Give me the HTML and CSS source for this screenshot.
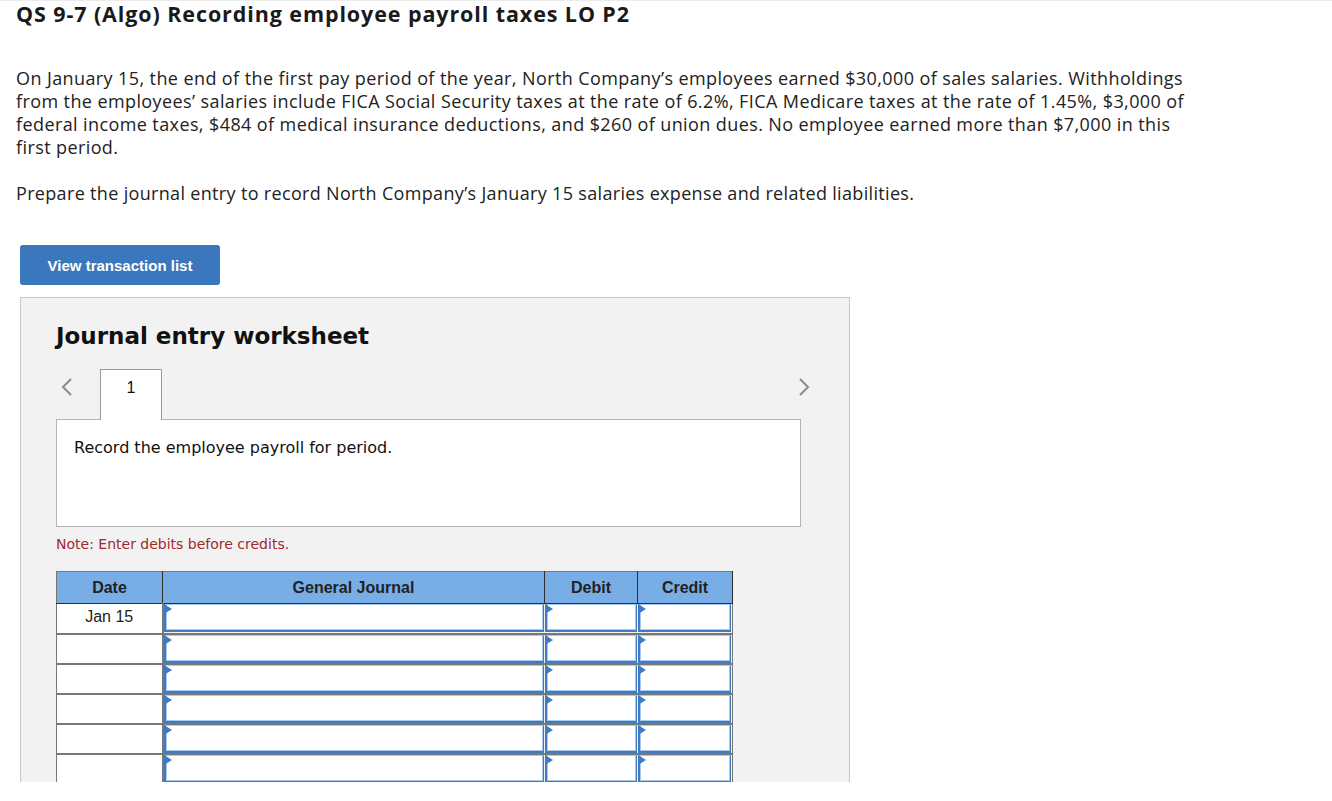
FILE: index.html
```html
<!DOCTYPE html>
<html>
<head>
<meta charset="utf-8">
<link rel="stylesheet" href="styles.css">
</head>
<body>
<div class="page">
  <h1 class="title">QS 9-7 (Algo) Recording employee payroll taxes LO P2</h1>
  <p class="para">On January 15, the end of the first pay period of the year, North Company’s employees earned $30,000 of sales salaries. Withholdings<br>from the employees’ salaries include FICA Social Security taxes at the rate of 6.2%, FICA Medicare taxes at the rate of 1.45%, $3,000 of<br>federal income taxes, $484 of medical insurance deductions, and $260 of union dues. No employee earned more than $7,000 in this<br>first period.</p>
  <p class="para para2">Prepare the journal entry to record North Company’s January 15 salaries expense and related liabilities.</p>
  <button class="btn">View transaction list</button>
  <div class="worksheet">
    <h2 class="ws-title">Journal entry worksheet</h2>
    <div class="tabs">
      <span class="chev chev-left"><svg width="12" height="20" viewBox="0 0 12 20"><path d="M10 2 L2 10 L10 18" fill="none" stroke="#8a8a8a" stroke-width="2"/></svg></span>
      <div class="tab">1</div>
      <span class="chev chev-right"><svg width="12" height="20" viewBox="0 0 12 20"><path d="M2 2 L10 10 L2 18" fill="none" stroke="#8a8a8a" stroke-width="2"/></svg></span>
    </div>
    <div class="desc">Record the employee payroll for period.</div>
    <div class="note">Note: Enter debits before credits.</div>
    <table class="journal">
      <thead>
        <tr><th class="c-date">Date</th><th class="c-gj">General Journal</th><th class="c-dr">Debit</th><th class="c-cr">Credit</th></tr>
      </thead>
      <tbody>
        <tr><td class="date">Jan 15</td><td class="in"><div class="box"></div></td><td class="in"><div class="box"></div></td><td class="in"><div class="box"></div></td></tr>
        <tr><td class="date"></td><td class="in"><div class="box"></div></td><td class="in"><div class="box"></div></td><td class="in"><div class="box"></div></td></tr>
        <tr><td class="date"></td><td class="in"><div class="box"></div></td><td class="in"><div class="box"></div></td><td class="in"><div class="box"></div></td></tr>
        <tr><td class="date"></td><td class="in"><div class="box"></div></td><td class="in"><div class="box"></div></td><td class="in"><div class="box"></div></td></tr>
        <tr><td class="date"></td><td class="in"><div class="box"></div></td><td class="in"><div class="box"></div></td><td class="in"><div class="box"></div></td></tr>
        <tr><td class="date"></td><td class="in"><div class="box"></div></td><td class="in"><div class="box"></div></td><td class="in"><div class="box"></div></td></tr>
        <tr><td class="date"></td><td class="in"><div class="box"></div></td><td class="in"><div class="box"></div></td><td class="in"><div class="box"></div></td></tr>
      </tbody>
    </table>
  </div>
</div>
</body>
</html>
```

FILE: styles.css
```css
html, body {
  margin: 0;
  padding: 0;
  background: #fff;
}
.page {
  height: 782px;
  overflow: hidden;
  border-top: 1px solid #ececec;
  box-sizing: border-box;
  font-family: "Open Sans", "Liberation Sans", sans-serif;
  color: #222;
}
.title {
  margin: 0;
  padding: 0 0 0 16px;
  font-size: 21.5px;
  font-weight: 700;
  line-height: 26px;
  letter-spacing: 0.9px;
  color: #1a1a1a;
}
.para {
  margin: 0;
  padding: 40px 0 0 16px;
  width: 1300px;
  font-size: 18px;
  line-height: 23px;
  letter-spacing: 0.4px;
  color: #222;
}
.para2 {
  padding-top: 23px;
  letter-spacing: 0.33px;
}
.btn {
  display: block;
  margin: 40px 0 0 20px;
  width: 200px;
  height: 40px;
  border: none;
  border-radius: 3px;
  background: #3a77bc;
  color: #fff;
  font-family: "Liberation Sans", Arial, sans-serif;
  font-weight: 700;
  font-size: 15px;
  padding: 0;
}
.worksheet {
  margin: 12px 0 0 20px;
  width: 830px;
  height: 600px;
  box-sizing: border-box;
  background: #f2f2f2;
  border: 1px solid #c6c6c6;
  padding: 0 0 0 35px;
}
.ws-title {
  margin: 0;
  padding-top: 24px;
  font-family: "DejaVu Sans", Verdana, sans-serif;
  font-weight: 700;
  font-size: 23px;
  line-height: 28px;
  color: #111;
}
.tabs {
  margin-top: 19px;
  display: flex;
  align-items: flex-start;
  height: 50px;
  width: 745px;
}
.chev {
  display: block;
  margin-top: 8px;
}
.chev-left {
  margin-left: 5px;
  width: 39px;
}
.chev-right {
  margin-left: auto;
  margin-right: -9px;
}
.tab {
  width: 62px;
  box-sizing: border-box;
  background: #fff;
  border: 1px solid #999;
  border-bottom: none;
  text-align: center;
  font-family: "Liberation Sans", Arial, sans-serif;
  font-size: 16px;
  padding-top: 9px;
  color: #111;
  position: relative;
  z-index: 1;
  height: 51px;
}
.desc {
  width: 745px;
  height: 108px;
  box-sizing: border-box;
  background: #fff;
  border: 1px solid #b4b4b4;
  padding: 17px 0 0 17px;
  font-family: "DejaVu Sans", Verdana, sans-serif;
  font-size: 16px;
  line-height: 22px;
  color: #111;
}
.note {
  margin-top: 7px;
  font-family: "DejaVu Sans", Verdana, sans-serif;
  font-size: 14px;
  line-height: 20px;
  color: #a3282c;
}
.journal {
  margin-top: 17px;
  border-collapse: collapse;
  width: 676px;
  table-layout: fixed;
  font-family: "Liberation Sans", Arial, sans-serif;
}
.journal th {
  background: #78ade5;
  height: 32px;
  padding: 0;
  font-size: 16px;
  font-weight: 700;
  color: #222;
  border: 1px solid #2f2f2f;
  border-top: 1px solid #777;
  box-sizing: border-box;
}
.journal th.c-date { border-left: 1px solid #777; }
.c-date { width: 106px; }
.c-gj { width: 382px; }
.c-dr { width: 93px; }
.c-cr { width: 95px; }
.journal td {
  height: 30px;
  padding: 0;
  border: 2px solid #777;
  border-top: none;
  border-left: none;
  box-sizing: border-box;
  background: #fff;
}
.journal td.date {
  border-left: 1px solid #777;
  text-align: center;
  font-size: 16px;
  color: #222;
  padding-bottom: 2px;
}
.journal td.in {
  border-right: none;
  border-bottom: 2px solid #777;
  padding: 0 1px 0 0;
  background: #f2f2f2;
}
.journal td.in:last-child { border-right: 1px solid #777; }
.box {
  position: relative;
  height: 28px;
  box-sizing: border-box;
  background: #fff;
  border-left: 2px solid #3f7bc0;
  border-bottom: 2px solid #3f7bc0;
  border-right: 1px solid #3f7bc0;
  border-top: 1px solid #a9c8ee;
  box-shadow: inset 1px -1px 0 #a9c8ee, inset -1px 0 0 #a9c8ee;
}
.box::before {
  content: "";
  position: absolute;
  left: -2px;
  top: -1px;
  width: 0;
  height: 0;
  border-top: 5px solid transparent;
  border-bottom: 5px solid transparent;
  border-left: 8px solid #3f7bc0;
}
```
